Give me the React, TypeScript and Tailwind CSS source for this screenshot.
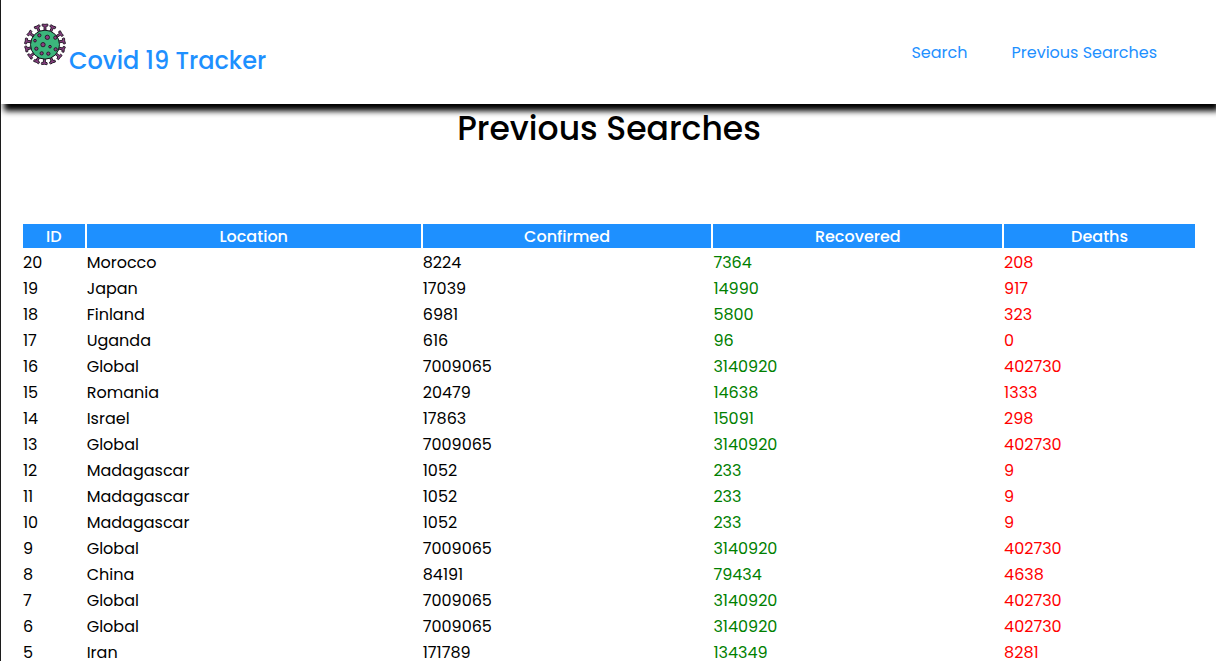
type Row = [id: number, location: string, confirmed: number, recovered: number, deaths: number];

const rows: Row[] = [
  [20, 'Morocco', 8224, 7364, 208],
  [19, 'Japan', 17039, 14990, 917],
  [18, 'Finland', 6981, 5800, 323],
  [17, 'Uganda', 616, 96, 0],
  [16, 'Global', 7009065, 3140920, 402730],
  [15, 'Romania', 20479, 14638, 1333],
  [14, 'Israel', 17863, 15091, 298],
  [13, 'Global', 7009065, 3140920, 402730],
  [12, 'Madagascar', 1052, 233, 9],
  [11, 'Madagascar', 1052, 233, 9],
  [10, 'Madagascar', 1052, 233, 9],
  [9, 'Global', 7009065, 3140920, 402730],
  [8, 'China', 84191, 79434, 4638],
  [7, 'Global', 7009065, 3140920, 402730],
  [6, 'Global', 7009065, 3140920, 402730],
  [5, 'Iran', 171789, 134349, 8281],
];

const spikeAngles = [0, 24, 56, 80, 105, 131, 157, 182, 206, 231, 256, 280, 306, 336];

const spots = [
  [58, 46, 5],
  [82, 52, 6.5],
  [106, 53, 5],
  [45, 62, 4],
  [69, 74, 6.5],
  [90, 80, 4],
  [107, 88, 5],
  [49, 86, 5],
  [65, 100, 5],
  [85, 101, 5],
];

function VirusLogo() {
  return (
    <svg viewBox="9 9 132 132" className="size-11 shrink-0" aria-hidden="true">
      <g fill="#8a3f82" stroke="#17131c" strokeWidth="2.5" strokeLinejoin="round">
        {spikeAngles.map((angle) => (
          <path
            key={angle}
            transform={`rotate(${angle} 75 73)`}
            d="M72 33V19L67 18.500Q65 15.500 67 12L75 13L83 12Q85 15.500 83 18.500L78 19V33Z"
          />
        ))}
      </g>
      <circle cx="75" cy="74" r="43.5" fill="#3cb57c" stroke="#17131c" strokeWidth="3" />
      <g fill="#8a3f82" stroke="#17131c" strokeWidth="2.5">
        {spots.map(([x, y, r]) => (
          <circle key={`${x}-${y}`} cx={x} cy={y} r={r} />
        ))}
      </g>
    </svg>
  );
}

export default function App() {
  return (
    <div className="min-h-screen border-l border-[#1c1c1c] bg-white font-['Poppins','Inter',sans-serif] text-[16px] leading-[normal] text-black">
      <header className="flex h-26 items-center justify-between pr-[59px] pl-[22px] text-[#1e90ff] shadow-[3px_7px_6px_#000]">
        <a href="#home" className="flex items-start gap-0.5 pb-1">
          <VirusLogo />
          <span className="pt-5 text-[24px] font-medium">Covid 19 Tracker</span>
        </a>
        <nav className="flex gap-11">
          <a href="#search">Search</a>
          <a href="#previous">Previous Searches</a>
        </nav>
      </header>
      <main className="pr-[19px] pl-5">
        <h1 className="text-center text-[33px] leading-[50px] font-medium">Previous Searches</h1>
        <table className="mt-[68px] w-full table-fixed border-separate border-spacing-0.5">
          <colgroup>
            <col className="w-[5.3%]" />
            <col className="w-[28.7%]" />
            <col className="w-[24.8%]" />
            <col className="w-[24.8%]" />
            <col className="w-[16.4%]" />
          </colgroup>
          <thead>
            <tr className="text-white">
              {['ID', 'Location', 'Confirmed', 'Recovered', 'Deaths'].map((label) => (
                <th key={label} scope="col" className="bg-[#1e90ff] p-0 pt-0.5 text-center leading-[22px] font-medium">
                  {label}
                </th>
              ))}
            </tr>
          </thead>
          <tbody className="leading-[22px]">
            {rows.map(([id, location, confirmed, recovered, deaths]) => (
              <tr key={id}>
                <td className="p-0 pt-0.5">{id}</td>
                <td className="p-0 pt-0.5">{location}</td>
                <td className="p-0 pt-0.5">{confirmed}</td>
                <td className="p-0 pt-0.5 text-[#008000]">{recovered}</td>
                <td className="p-0 pt-0.5 text-[#ff0000]">{deaths}</td>
              </tr>
            ))}
          </tbody>
        </table>
      </main>
    </div>
  );
}
